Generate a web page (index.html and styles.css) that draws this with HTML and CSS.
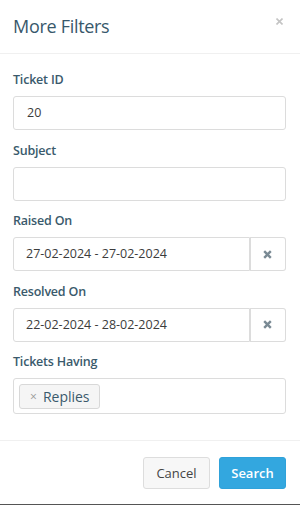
FILE: index.html
```html
<!DOCTYPE html>
<html>
<head>
<meta charset="utf-8">
<link rel="stylesheet" href="styles.css">
</head>
<body>
<div class="modal">
  <div class="modal-header">
    <h4 class="modal-title">More Filters</h4>
    <span class="close"><svg width="7" height="7" viewBox="0 0 7 7"><path d="M0.5 0.5L6.5 6.5M6.5 0.5L0.5 6.5" stroke="#c4c4c4" stroke-width="1.6"/></svg></span>
  </div>
  <div class="modal-body">
    <div class="group">
      <label class="label">Ticket ID</label>
      <div class="input">20</div>
    </div>
    <div class="group">
      <label class="label">Subject</label>
      <div class="input"></div>
    </div>
    <div class="group">
      <label class="label">Raised On</label>
      <div class="input-group">
        <div class="input grow">27-02-2024 - 27-02-2024</div>
        <span class="addon"><svg width="9" height="9" viewBox="0 0 9 9"><path d="M1.2 1.2L7.8 7.8M7.8 1.2L1.2 7.8" stroke="#7a8a94" stroke-width="2.4"/></svg></span>
      </div>
    </div>
    <div class="group">
      <label class="label">Resolved On</label>
      <div class="input-group">
        <div class="input grow">22-02-2024 - 28-02-2024</div>
        <span class="addon"><svg width="9" height="9" viewBox="0 0 9 9"><path d="M1.2 1.2L7.8 7.8M7.8 1.2L1.2 7.8" stroke="#7a8a94" stroke-width="2.4"/></svg></span>
      </div>
    </div>
    <div class="group">
      <label class="label">Tickets Having</label>
      <div class="select">
        <span class="tag"><span class="tag-x">×</span>Replies</span>
      </div>
    </div>
  </div>
  <div class="modal-footer">
    <button class="btn btn-default">Cancel</button>
    <button class="btn btn-primary">Search</button>
  </div>
</div>
</body>
</html>
```
FILE: styles.css
```css
html, body {
  margin: 0;
  padding: 0;
}
body {
  background: #555;
  font-family: "Open Sans", "Liberation Sans", sans-serif;
}
.modal {
  width: 300px;
  height: 504px;
  background: #fff;
  display: flex;
  flex-direction: column;
  box-sizing: border-box;
}
.modal-header {
  height: 53px;
  border-bottom: 1px solid #f0f0f0;
  box-sizing: content-box;
  display: flex;
  align-items: center;
  justify-content: space-between;
  padding: 0 17px 0 13px;
}
.modal-title {
  margin: 0;
  font-size: 18px;
  font-weight: 400;
  color: #38586b;
  letter-spacing: -0.3px;
  position: relative;
  top: -1px;
}
.close {
  display: flex;
  position: relative;
  top: -5px;
}
.modal-body {
  padding: 17px 14px 26px 13px;
  display: flex;
  flex-direction: column;
  gap: 11.5px;
  border-bottom: 1px solid #f0f0f0;
}
.group {
  display: flex;
  flex-direction: column;
}
.label {
  font-size: 12.5px;
  line-height: 18px;
  height: 18px;
  margin-bottom: 7px;
  color: #3a5a6c;
  font-weight: 600;
  letter-spacing: -0.2px;
}
.input {
  height: 34px;
  box-sizing: border-box;
  border: 1px solid #dcdcdc;
  border-radius: 3px;
  padding: 0 13px;
  font-size: 12.5px;
  line-height: 32px;
  color: #3c3c3c;
}
.input-group {
  display: flex;
  height: 34px;
}
.input.grow {
  flex: 1;
  border-radius: 3px 0 0 3px;
  padding-left: 12px;
}
.addon {
  width: 36px;
  box-sizing: border-box;
  border: 1px solid #dcdcdc;
  border-left: none;
  border-radius: 0 3px 3px 0;
  display: flex;
  align-items: center;
  justify-content: center;
  box-shadow: inset 1px 0 0 #dcdcdc;
}
.select {
  height: 36px;
  box-sizing: border-box;
  border: 1px solid #dcdcdc;
  border-radius: 3px;
  padding: 5px 5px;
  display: flex;
  align-items: flex-start;
}
.tag {
  height: 25px;
  box-sizing: border-box;
  border: 1px solid #d8d8d8;
  background: #f5f5f5;
  border-radius: 3px;
  padding: 0 9px 0 10px;
  display: inline-flex;
  align-items: center;
  font-size: 14px;
  color: #3a5a6c;
}
.tag-x {
  color: #999;
  font-size: 12px;
  margin-right: 6px;
}
.modal-footer {
  flex: 1;
  display: flex;
  justify-content: flex-end;
  align-items: flex-start;
  padding: 16px 14px 0 0;
  gap: 9px;
}
.btn {
  height: 32px;
  width: 67px;
  border-radius: 3px;
  font-family: "Open Sans", "Liberation Sans", sans-serif;
  font-size: 13px;
  padding: 0;
  cursor: pointer;
}
.btn-default {
  background: #f7f7f7;
  border: 1px solid #dddddd;
  color: #444;
}
.btn-primary {
  background: #33a7df;
  border: 1px solid #2fa2da;
  color: #fff;
  font-weight: 600;
}
```
